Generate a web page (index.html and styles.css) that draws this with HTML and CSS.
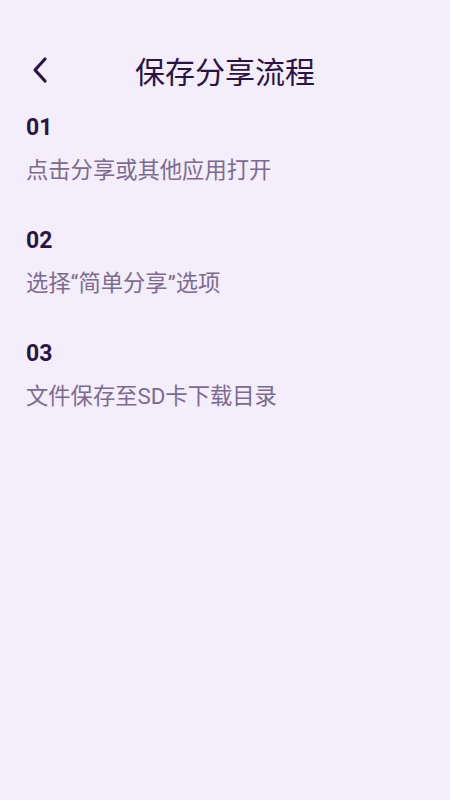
FILE: index.html
```html
<!DOCTYPE html>
<html lang="zh-CN">
<head>
    <meta charset="UTF-8">
    <meta name="viewport" content="width=device-width, initial-scale=1.0">
    <title>保存分享流程</title>
    <link rel="stylesheet" href="styles.css">
</head>
<body>
    <div class="header">
        <span class="back">
            <svg width="20" height="28" viewBox="0 0 20 28">
                <polyline points="15,3 5,14 15,25" fill="none" stroke="#2a1444" stroke-width="3.2" stroke-linecap="round" stroke-linejoin="round"/>
            </svg>
        </span>
        <h1 class="title">保存分享流程</h1>
        <span></span>
    </div>

    <div class="steps">
        <div class="step">
            <div class="num">01</div>
            <div class="desc">点击分享或其他应用打开</div>
        </div>
        <div class="step">
            <div class="num">02</div>
            <div class="desc">选择“简单分享”选项</div>
        </div>
        <div class="step">
            <div class="num">03</div>
            <div class="desc">文件保存至SD卡下载目录</div>
        </div>
    </div>
</body>
</html>
```

FILE: styles.css
```css
/* 页面基础 */
body {
    margin: 0;
    background-color: #f4edfc;
    font-family: Roboto, "Noto Sans CJK SC", sans-serif;
    min-height: 800px;
}

.header {
    display: grid;
    grid-template-columns: 1fr auto 1fr;
    align-items: center;
    height: 60px;
    padding: 40px 26px 0 30px;
}

.back {
    display: flex;
    align-items: center;
}

.title {
    margin: 0 4px 0 0;
    font-family: "Noto Sans CJK SC", sans-serif;
    font-size: 30px;
    font-weight: 400;
    color: #2a1444;
}

/* 步骤列表 */
.steps {
    padding: 13px 26px 0;
}

.step {
    display: flex;
    flex-direction: column;
    gap: 11px;
    margin-bottom: 40px;
}

.num {
    font-size: 23px;
    font-weight: 700;
    line-height: 30px;
    color: #2a1444;
}

.desc {
    font-size: 22.3px;
    line-height: 32px;
    color: #7c6b8f;
}
```
